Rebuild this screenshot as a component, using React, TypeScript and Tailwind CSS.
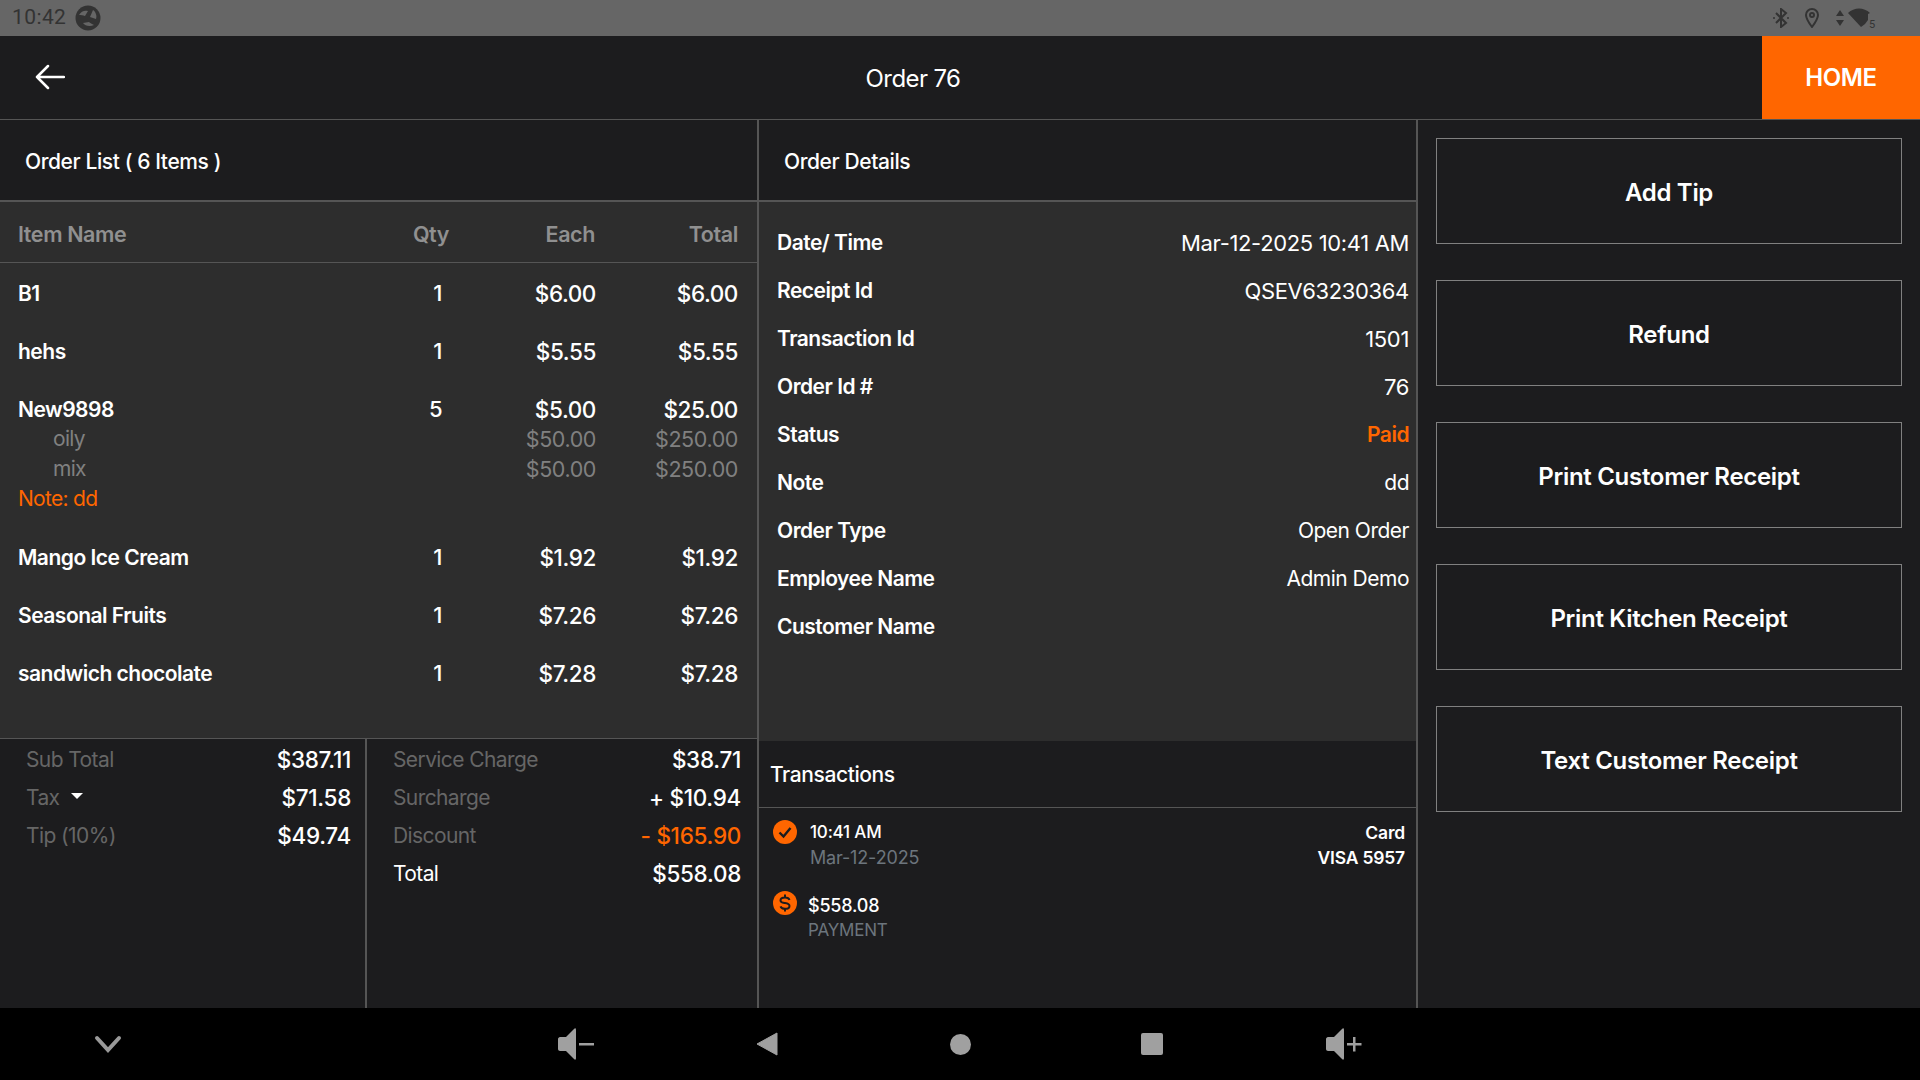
import React from 'react';

const ORANGE = 'text-[#ff6600]';

type Modifier = { name: string; each: string; total: string };
type Item = { name: string; qty: number; each: string; total: string; modifiers?: Modifier[]; note?: string };

const items: Item[] = [
  { name: 'B1', qty: 1, each: '$6.00', total: '$6.00' },
  { name: 'hehs', qty: 1, each: '$5.55', total: '$5.55' },
  {
    name: 'New9898',
    qty: 5,
    each: '$5.00',
    total: '$25.00',
    modifiers: [
      { name: 'oily', each: '$50.00', total: '$250.00' },
      { name: 'mix', each: '$50.00', total: '$250.00' },
    ],
    note: 'Note: dd',
  },
  { name: 'Mango Ice Cream', qty: 1, each: '$1.92', total: '$1.92' },
  { name: 'Seasonal Fruits', qty: 1, each: '$7.26', total: '$7.26' },
  { name: 'sandwich chocolate', qty: 1, each: '$7.28', total: '$7.28' },
];

// third entry: value is mostly letters, so it runs narrower than the digit ones
const details: [string, string, boolean?][] = [
  ['Date/ Time', 'Mar-12-2025 10:41 AM'],
  ['Receipt Id', 'QSEV63230364'],
  ['Transaction Id', '1501'],
  ['Order Id #', '76'],
  ['Status', 'Paid'],
  ['Note', 'dd', true],
  ['Order Type', 'Open Order', true],
  ['Employee Name', 'Admin Demo', true],
  ['Customer Name', ''],
];

const actions = ['Add Tip', 'Refund', 'Print Customer Receipt', 'Print Kitchen Receipt', 'Text Customer Receipt'];

const StatusBar = () => (
  <div className="h-9 bg-[#666666] flex items-center justify-between pl-3 pr-[38px] text-[#333333]">
    <div className="flex items-center gap-[9px]">
      <span className="text-[21px] tracking-[0.4px]" style={{ fontFamily: 'Roboto, sans-serif' }}>
        10:42
      </span>
      <svg width="26" height="26" viewBox="0 0 26 26">
        <circle cx="13" cy="13" r="12.5" fill="#333333" />
        <path d="M4 10c2-4 6-5 9-4l-3 5c-2-1-4-1-6-1zM18 5c3 2 4 6 3 9l-6-2c1-2 2-5 3-7zM19 20c-4 2-9 1-11-2l6-1c1 1 3 2 5 3z" fill="#666666" />
      </svg>
    </div>
    <div className="flex items-center">
      <svg width="18" height="20" viewBox="0 0 18 20" fill="none" stroke="#333333" strokeWidth="2">
        <path d="M4 5l10 10-5 4V1l5 4L4 15" />
        <circle cx="2" cy="10" r="1" fill="#333333" stroke="none" />
        <circle cx="16" cy="10" r="1" fill="#333333" stroke="none" />
      </svg>
      <svg className="ml-[15px]" width="14" height="20" viewBox="0 0 14 20" fill="none" stroke="#333333" strokeWidth="2">
        <path d="M7 19C4 15 1 11 1 7a6 6 0 0 1 12 0c0 4-3 8-6 12z" />
        <circle cx="7" cy="7" r="2" />
      </svg>
      <svg className="ml-[17px]" width="8" height="18" viewBox="0 0 8 18" fill="#333333">
        <path d="M4 1l4 6H0zM4 17l4-6H0z" />
      </svg>
      <svg className="ml-[4px]" width="34" height="24" viewBox="0 0 34 24" fill="#333333">
        <path d="M0 7c6-6 16-6 22 0l-2 1v6l-3 4-4 3z" />
        <text x="21" y="22" fontSize="11" fontFamily="Roboto, sans-serif" fill="#333333">
          5
        </text>
      </svg>
    </div>
  </div>
);

const Header = () => (
  <div className="h-[84px] bg-[#1c1c1e] border-b border-[#555555] flex items-stretch">
    <div className="w-[1762px] relative flex items-center justify-center pl-[64px] pt-[3px]">
      <svg className="absolute left-[35px] top-[28px]" width="30" height="26" viewBox="0 0 30 26" fill="none" stroke="white" strokeWidth="2.5" strokeLinecap="round" strokeLinejoin="round">
        <path d="M29 13H2M13 2L2 13l11 11" />
      </svg>
      <span className="text-[24px] text-white tracking-[-0.6px]">Order 76</span>
    </div>
    <div className="flex-1 bg-[#ff6600] flex items-center justify-center text-white text-[24px] font-semibold tracking-[-0.4px]">
      HOME
    </div>
  </div>
);

const PanelTitle = ({ children }: { children: React.ReactNode }) => (
  <div className="h-[82px] flex items-center pl-[25px] pt-[3px] border-b-2 border-[#555555] text-white text-[21px] font-medium tracking-[-0.4px]">
    {children}
  </div>
);

const rowGrid = 'grid grid-cols-[1fr_70px_145px_142px] pl-[18px] pr-[19px]';

const OrderList = () => (
  <div className="flex-1 bg-[#2d2d2d] flex flex-col">
    <div className={`${rowGrid} h-[61px] pt-[5px] items-center border-b border-[#555555] text-[#909090] text-[21.5px] font-semibold tracking-[-0.4px]`}>
      <span>Item Name</span>
      <span className="text-right pr-[2px]">Qty</span>
      <span className="text-right pr-[1px]">Each</span>
      <span className="text-right">Total</span>
    </div>
    <div className="pt-[14px]">
      {items.map((item) => (
        <div key={item.name} className="pb-[28px]">
          <div className={`${rowGrid} h-[30px] items-center text-white text-[21px] font-semibold tracking-[-0.5px]`}>
            <span>{item.name}</span>
            <span className="text-right pr-[9px] text-[22px] font-medium">{item.qty}</span>
            <span className="text-right text-[22.5px] font-medium tracking-[-0.4px]">{item.each}</span>
            <span className="text-right text-[22.5px] font-medium tracking-[-0.4px]">{item.total}</span>
          </div>
          {item.modifiers?.map((m) => (
            <div key={m.name} className={`${rowGrid} h-[30px] items-center text-[#808080] text-[21px] tracking-[-0.4px]`}>
              <span className="pl-[35px] tracking-[-0.7px]">{m.name}</span>
              <span />
              <span className="text-right text-[21.5px]">{m.each}</span>
              <span className="text-right text-[21.5px]">{m.total}</span>
            </div>
          ))}
          {item.note && <div className={`pl-[18px] h-[30px] pt-[2px] flex items-center text-[21px] tracking-[-0.7px] ${ORANGE}`}>{item.note}</div>}
        </div>
      ))}
    </div>
  </div>
);

const SummaryRow = ({ label, value, valueClass = 'text-white', labelClass = 'text-[#666666]' }: { label: React.ReactNode; value: string; valueClass?: string; labelClass?: string }) => (
  <div className="h-[38px] flex items-center justify-between text-[21px] tracking-[-0.6px]">
    <span className={labelClass}>{label}</span>
    <span className={`font-medium text-[22.5px] tracking-[-0.3px] ${valueClass}`}>{value}</span>
  </div>
);

const Summary = () => (
  <div className="h-[270px] flex border-t border-[#555555] bg-[#1c1c1e]">
    <div className="w-[367px] border-r-2 border-[#555555] pl-[26px] pr-[14px] pt-[2px]">
      <SummaryRow label="Sub Total" value="$387.11" />
      <SummaryRow
        label={
          <span className="flex items-center gap-[12px]">
            Tax
            <span className="w-0 h-0 border-x-[6px] border-x-transparent border-t-[6px] border-t-white mb-[4px]" />
          </span>
        }
        value="$71.58"
      />
      <SummaryRow label="Tip (10%)" value="$49.74" />
    </div>
    <div className="flex-1 pl-[26px] pr-[16px] pt-[2px]">
      <SummaryRow label="Service Charge" value="$38.71" />
      <SummaryRow label="Surcharge" value="+ $10.94" />
      <SummaryRow label="Discount" value="- $165.90" valueClass={ORANGE} />
      <SummaryRow label="Total" value="$558.08" labelClass="text-white" />
    </div>
  </div>
);

const OrderDetails = () => (
  <div className="flex-1 bg-[#2d2d2d] pl-[18px] pr-[7px] pt-[17px]">
    {details.map(([label, value, narrow]) => (
      <div key={label} className="h-[48px] flex items-center justify-between text-[21px] tracking-[-0.5px]">
        <span className="text-white font-semibold">{label}</span>
        {label === 'Status' ? (
          <span className={`font-semibold ${ORANGE}`}>{value}</span>
        ) : narrow ? (
          <span className="text-white tracking-[-0.5px]">{value}</span>
        ) : (
          <span className="text-white text-[22px] tracking-[-0.35px]">{value}</span>
        )}
      </div>
    ))}
  </div>
);

const Transactions = () => (
  <div className="h-[267px] bg-[#1c1c1e]">
    <div className="h-[67px] border-b border-[#555555] flex items-center pl-[11px] pt-[2px] text-white text-[21px] font-medium tracking-[-0.4px]">
      Transactions
    </div>
    <div className="pl-[14px] pr-[11px] pt-[12px]">
      <div className="flex justify-between">
        <div className="flex gap-[13px]">
          <svg width="24" height="24" viewBox="0 0 24 24">
            <circle cx="12" cy="12" r="12" fill="#ff6600" />
            <path d="M6.500 12.500l4 4 7-8.500" fill="none" stroke="#1c1c1e" strokeWidth="2.400" />
          </svg>
          <div className="leading-[25px] text-[17px] tracking-[-0.2px]">
            <div className="text-white font-medium">10:41 AM</div>
            <div className="text-[#6c757d] text-[18px] tracking-[-0.15px]">Mar-12-2025</div>
          </div>
        </div>
        <div className="leading-[25px] text-[17.5px] tracking-[-0.2px] text-white font-semibold text-right">
          <div>Card</div>
          <div>VISA 5957</div>
        </div>
      </div>
      <div className="flex gap-[11px] mt-[23px]">
        <svg className="mt-[-2px]" width="24" height="24" viewBox="0 0 24 24">
          <circle cx="12" cy="12" r="12" fill="#ff6600" />
          <path d="M16.500 9c-.5-1.500-2.300-2.400-4.500-2.400-2.400 0-4.500 1.100-4.500 2.900 0 2 2.200 2.200 4.500 2.600 2.300.4 4.500.8 4.500 2.800 0 1.800-2.100 2.900-4.500 2.900-2.200 0-4-.9-4.500-2.400M12 3.500v3M12 17.800v2.700" fill="none" stroke="#1c1c1e" strokeWidth="2" />
        </svg>
        <div className="leading-[25px] text-[18px] tracking-[-0.2px]">
          <div className="text-white font-medium">$558.08</div>
          <div className="text-[#6c757d] text-[17px]">PAYMENT</div>
        </div>
      </div>
    </div>
  </div>
);

const ActionButtons = () => (
  <div className="flex-1 bg-[#1c1c1e] pt-[18px] pl-[18px] pr-[18px] flex flex-col gap-[36px]">
    {actions.map((a) => (
      <button key={a} className="h-[106px] pt-[3px] border border-[#808080] text-white text-[24px] font-semibold tracking-[-0.3px]">
        {a}
      </button>
    ))}
  </div>
);

const NavBar = () => (
  <div className="h-[72px] bg-black flex items-center justify-center relative">
    <svg className="absolute left-[94px] top-[27px]" width="28" height="20" viewBox="0 0 28 20" fill="none" stroke="#999999" strokeWidth="4" strokeLinecap="round">
      <path d="M3 3l11 12L25 3" />
    </svg>
    <div className="grid grid-cols-[repeat(5,192px)] justify-items-center items-center">
      <svg width="38" height="32" viewBox="0 0 38 32" fill="#a0a0a0">
        <path d="M1 11c0-1 1-2 2-2h6l8-8c1-1 2-1 2 1v28c0 2-1 2-2 1l-8-8H3c-1 0-2-1-2-2z" />
        <rect x="22" y="15" width="15" height="2.500" />
      </svg>
      <svg className="mr-[2px]" width="22" height="24" viewBox="0 0 22 24" fill="#a0a0a0">
        <path d="M21 1v22L1 12z" stroke="#a0a0a0" strokeLinejoin="round" />
      </svg>
      <div className="w-[21px] h-[21px] rounded-full bg-[#a0a0a0]" />
      <div className="w-[22px] h-[22px] rounded-[2px] bg-[#a0a0a0]" />
      <svg width="38" height="32" viewBox="0 0 38 32" fill="#a0a0a0">
        <path d="M1 11c0-1 1-2 2-2h6l8-8c1-1 2-1 2 1v28c0 2-1 2-2 1l-8-8H3c-1 0-2-1-2-2z" />
        <path d="M22 15h6v-6h2.500v6h6v2.500h-6v6H28v-6h-6z" />
      </svg>
    </div>
  </div>
);

export default function App() {
  return (
    <div className="w-[1920px] h-[1080px] overflow-hidden flex flex-col bg-[#1c1c1e]" style={{ fontFamily: 'Inter, sans-serif' }}>
      <StatusBar />
      <Header />
      <div className="flex-1 flex min-h-0">
        <div className="w-[759px] border-r-2 border-[#555555] flex flex-col">
          <PanelTitle>Order List ( 6 Items )</PanelTitle>
          <OrderList />
          <Summary />
        </div>
        <div className="w-[659px] border-r-2 border-[#555555] flex flex-col">
          <PanelTitle>Order Details</PanelTitle>
          <OrderDetails />
          <Transactions />
        </div>
        <ActionButtons />
      </div>
      <NavBar />
    </div>
  );
}
